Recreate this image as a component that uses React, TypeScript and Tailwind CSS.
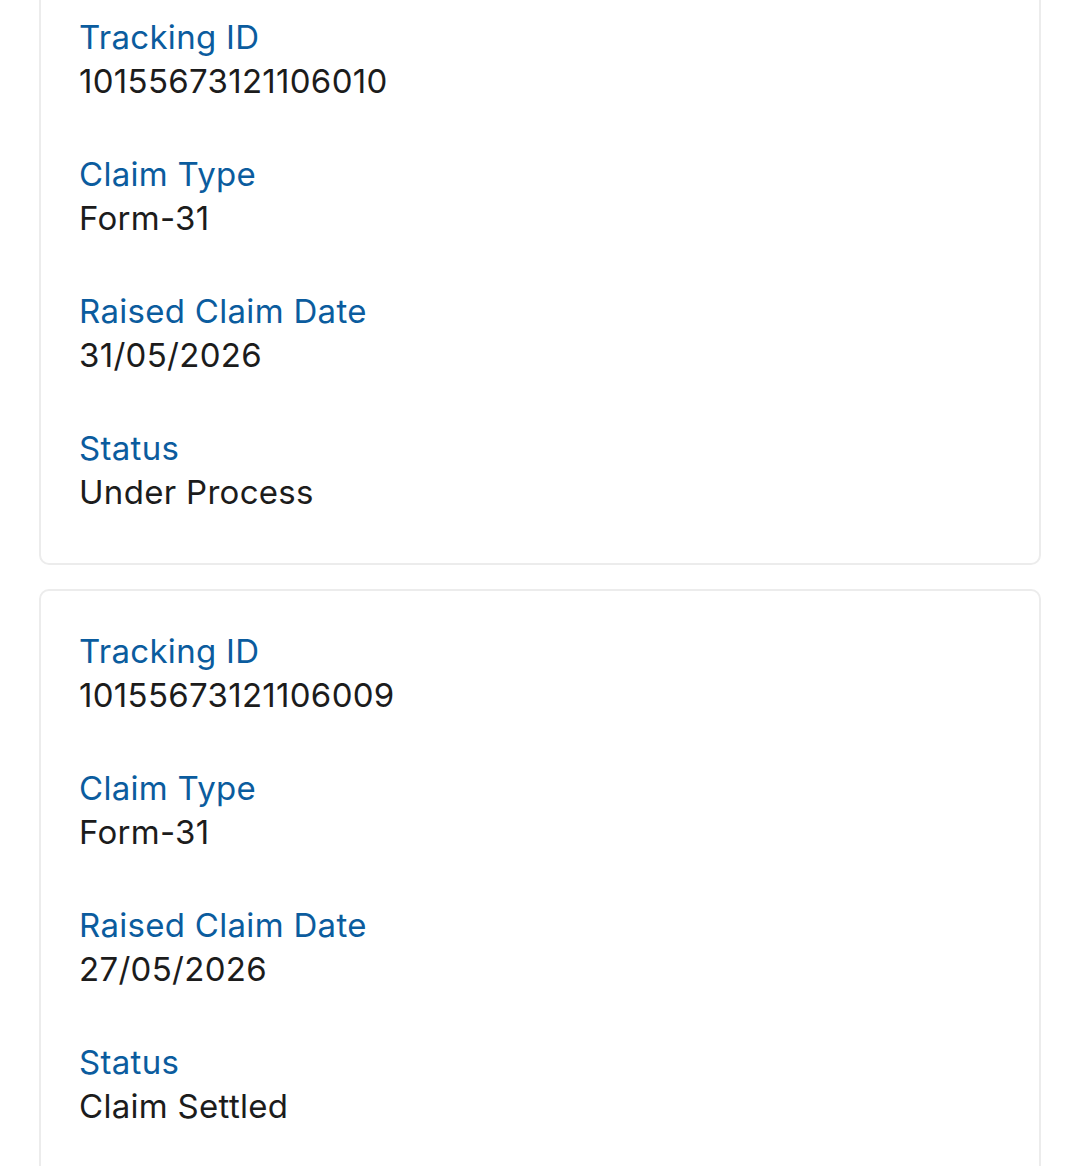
import React from "react";

type Claim = { id: string; type: string; date: string; status: string };

const claims: Claim[] = [
  { id: "10155673121106010", type: "Form-31", date: "31/05/2026", status: "Under Process" },
  { id: "10155673121106009", type: "Form-31", date: "27/05/2026", status: "Claim Settled" },
];

function Field({ label, value }: { label: string; value: string }) {
  return (
    <div className="flex flex-col">
      <div className="text-[33px] leading-[44px] tracking-[0.3px] text-[#0b5c9e]">{label}</div>
      <div className="text-[33px] leading-[44px] tracking-[0.3px] text-[#1c1c1c]">{value}</div>
    </div>
  );
}

export default function App() {
  return (
    <div
      className="w-[1080px] h-[1166px] overflow-hidden bg-white"
      style={{ fontFamily: "Inter, 'Noto Sans', sans-serif" }}
    >
      <div className="mt-[-25px] px-[39px] flex flex-col gap-[24px]">
        {claims.map((c) => (
          <div
            key={c.id}
            className="rounded-[10px] border-2 border-[#ececec] bg-white pl-[38px] pr-[40px] pt-[38px] pb-[49px] flex flex-col gap-[49px]"
          >
            <Field label="Tracking ID" value={c.id} />
            <Field label="Claim Type" value={c.type} />
            <Field label="Raised Claim Date" value={c.date} />
            <Field label="Status" value={c.status} />
          </div>
        ))}
      </div>
    </div>
  );
}
